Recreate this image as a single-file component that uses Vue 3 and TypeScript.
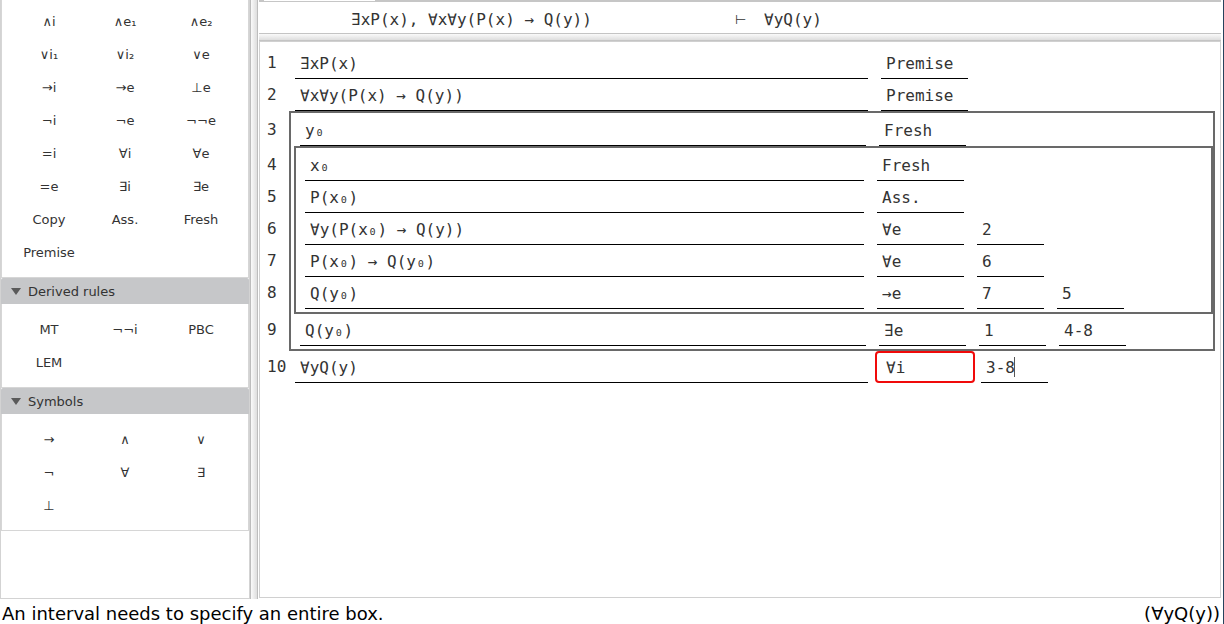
<script setup lang="ts">
import { computed, ref } from 'vue'

interface Line {
  formula: string
  rule: string
  refs: string[]
  depth: number
  invalid?: boolean
  active?: boolean
}

interface Palette {
  title: string
  headed: boolean
  open: boolean
  items: string[]
}

interface BoxNode {
  line?: number
  children?: BoxNode[]
}

const palettes = ref<Palette[]>([
  {
    title: 'Basic rules',
    headed: false,
    open: true,
    items: [
      '∧i', '∧e₁', '∧e₂', '∨i₁', '∨i₂', '∨e', '→i', '→e', '⊥e', '¬i', '¬e', '¬¬e',
      '=i', '∀i', '∀e', '=e', '∃i', '∃e', 'Copy', 'Ass.', 'Fresh', 'Premise',
    ],
  },
  { title: 'Derived rules', headed: true, open: true, items: ['MT', '¬¬i', 'PBC', 'LEM'] },
  { title: 'Symbols', headed: true, open: true, items: ['→', '∧', '∨', '¬', '∀', '∃', '⊥'] },
])

const premises = ref('∃xP(x), ∀x∀y(P(x) → Q(y))')
const conclusion = ref('∀yQ(y)')

const lines = ref<Line[]>([
  { formula: '∃xP(x)', rule: 'Premise', refs: [], depth: 0 },
  { formula: '∀x∀y(P(x) → Q(y))', rule: 'Premise', refs: [], depth: 0 },
  { formula: 'y₀', rule: 'Fresh', refs: [], depth: 1 },
  { formula: 'x₀', rule: 'Fresh', refs: [], depth: 2 },
  { formula: 'P(x₀)', rule: 'Ass.', refs: [], depth: 2 },
  { formula: '∀y(P(x₀) → Q(y))', rule: '∀e', refs: ['2'], depth: 2 },
  { formula: 'P(x₀) → Q(y₀)', rule: '∀e', refs: ['6'], depth: 2 },
  { formula: 'Q(y₀)', rule: '→e', refs: ['7', '5'], depth: 2 },
  { formula: 'Q(y₀)', rule: '∃e', refs: ['1', '4-8'], depth: 1 },
  { formula: '∀yQ(y)', rule: '∀i', refs: ['3-8'], depth: 0, invalid: true, active: true },
])

// Groups consecutive deeper lines into nested boxes.
function nest(from: number, to: number, depth: number): BoxNode[] {
  const out: BoxNode[] = []
  let i = from
  while (i < to) {
    if (lines.value[i].depth === depth) {
      out.push({ line: i })
      i++
    } else {
      let j = i
      while (j < to && lines.value[j].depth > depth) j++
      out.push({ children: nest(i, j, depth + 1) })
      i = j
    }
  }
  return out
}

const outer = computed(() => nest(0, lines.value.length, 0))

// Line numbers leave room where a box edge passes between two lines.
const gutter = computed(() =>
  lines.value.map((l, i) => ({
    number: i + 1,
    opens: i > 0 && l.depth > lines.value[i - 1].depth,
    closes: i < lines.value.length - 1 && lines.value[i + 1].depth < l.depth,
  })),
)

// Every block is a list of groups; a plain line is a group of one.
const blocks = computed(() =>
  outer.value.map((n) => ({
    boxed: !!n.children,
    groups: (n.children ?? [n]).map((c) => ({
      boxed: !!c.children,
      rows: (c.children ?? [c]).map((r) => r.line as number),
    })),
  })),
)
</script>

<template>
  <div class="app">
    <div class="workspace">
      <aside class="sidebar">
        <section v-for="p in palettes" :key="p.title" class="palette" :aria-label="p.title">
          <button v-if="p.headed" class="palette-title" :aria-expanded="p.open" @click="p.open = !p.open">
            <svg class="arrow" viewBox="0 0 10 7" width="10" height="7" aria-hidden="true">
              <path d="M0 0H10L5 7Z" fill="#5a5a5a" />
            </svg>
            {{ p.title }}
          </button>
          <div v-show="p.open" class="palette-body" :class="{ first: !p.headed }">
            <button v-for="item in p.items" :key="item" class="key">{{ item }}</button>
          </div>
        </section>
      </aside>
      <div class="divider vertical"></div>
      <main class="editor">
        <div class="tabs"><div class="tab"></div></div>
        <header class="sequent">
          <input v-model="premises" class="field" aria-label="Premises" spellcheck="false" />
          <span class="turnstile">⊢</span>
          <input v-model="conclusion" class="field" aria-label="Conclusion" spellcheck="false" />
        </header>
        <div class="divider horizontal"></div>
        <div class="proof">
          <div class="gutter">
            <div v-for="g in gutter" :key="g.number" class="number" :class="{ opens: g.opens, closes: g.closes }">
              {{ g.number }}
            </div>
          </div>
          <div class="lines">
            <div v-for="(b, bi) in blocks" :key="bi" :class="{ box: b.boxed }">
              <div v-for="(g, gi) in b.groups" :key="gi" :class="{ box: g.boxed }">
                <div v-for="i in g.rows" :key="i" class="row">
                  <input v-model="lines[i].formula" class="field cell formula" :aria-label="`Formula ${i + 1}`" spellcheck="false" />
                  <input v-model="lines[i].rule" class="field cell rule" :class="{ invalid: lines[i].invalid }" :aria-label="`Rule ${i + 1}`" spellcheck="false" />
                  <div v-for="k in 3" :key="k" class="ref">
                    <template v-if="k <= lines[i].refs.length">
                      <input v-model="lines[i].refs[k - 1]" class="field cell" :aria-label="`Reference ${k} of line ${i + 1}`" spellcheck="false" />
                      <span v-if="lines[i].active" class="caret"></span>
                    </template>
                  </div>
                </div>
              </div>
            </div>
          </div>
        </div>
      </main>
    </div>
    <footer class="status">
      <span>An interval needs to specify an entire box.</span>
      <span>(∀yQ(y))</span>
    </footer>
  </div>
</template>

<style>
body {
  background: #fff;
}
</style>

<style scoped>
.app {
  box-sizing: border-box;
  min-height: 100vh;
  display: flex;
  flex-direction: column;
  border-right: 1px solid #27425c;
  font-family: "DejaVu Sans", sans-serif;
  font-size: 13px;
  color: #333;
}
.app * {
  box-sizing: border-box;
}
.workspace {
  flex: 1;
  display: flex;
}
.sidebar {
  width: 250px;
  flex: none;
  border: 1px solid #d3d3d3;
  border-top: 0;
}
.palette-title {
  display: flex;
  align-items: center;
  gap: 7px;
  width: 100%;
  height: 26px;
  padding: 0 10px;
  border: 0;
  border-radius: 2px 2px 0 0;
  background: #c6c7c9;
  font: inherit;
  color: inherit;
}
.palette-body {
  display: grid;
  grid-template-columns: repeat(3, 76px);
  grid-auto-rows: 33px;
  padding: 9px 9px 8px;
  border: 1px solid #d6d6d6;
  border-top: 0;
}
.palette-body.first {
  padding-top: 5px;
}
.key {
  padding: 0;
  border: 0;
  background: none;
  font: inherit;
  color: inherit;
}
.divider.vertical {
  width: 8px;
  flex: none;
  border: 1px solid #bdbdbd;
  border-width: 0 1px;
  background: linear-gradient(to right, #fafafa, #dedede);
}
.divider.horizontal {
  height: 8px;
  border: 1px solid #c4c4c4;
  border-width: 1px 0;
  background: linear-gradient(#fafafa, #dedede);
}
.editor {
  flex: 1;
  min-width: 0;
  display: flex;
  flex-direction: column;
  padding: 0 2px 1px 1px;
}
.tabs {
  height: 2px;
  padding-left: 5px;
  background: #c6c6c6;
}
.tab {
  width: 111px;
  height: 1px;
  background: #fff;
}
.sequent {
  display: grid;
  grid-template-columns: 1fr 10px 1fr;
  gap: 14px;
  align-items: center;
  height: 31px;
  padding: 3px 87px 0;
}
.field {
  display: block;
  width: 100%;
  min-width: 0;
  height: 32px;
  margin: 0;
  padding: 0 5px;
  border: 0;
  border-radius: 0;
  outline: 0;
  background: none;
  font-family: "DejaVu Sans Mono", monospace;
  font-size: 16px;
  color: #333;
}
.sequent .field {
  height: 28px;
}
.turnstile {
  font-size: 13px;
}
.proof {
  flex: 1;
  display: flex;
  padding: 5px 5px 0 7px;
  border: 1px solid #d0d0d0;
}
.gutter {
  width: 22px;
  flex: none;
  font-family: "DejaVu Sans Mono", monospace;
  font-size: 16px;
  line-height: 32px;
}
.number {
  height: 32px;
}
.number.opens {
  margin-top: 3px;
}
.number.closes {
  margin-bottom: 5px;
}
.lines {
  flex: 1;
  min-width: 0;
}
.box {
  padding: 1px 0 3px 3px;
  border: 2px solid #696969;
}
.row {
  display: flex;
  gap: 13px;
  padding: 0 7px 0 6px;
}
.cell {
  padding-top: 1px;
  border-bottom: 1px solid #000;
}
.formula {
  flex: 1;
}
.rule {
  flex: none;
  width: 87px;
}
.rule.invalid {
  width: 100px;
  margin: 0 -7px 0 -6px;
  padding: 0 9px;
  border: 2px solid #f00a0a;
  border-radius: 4px;
}
.ref {
  position: relative;
  flex: none;
  width: 67px;
}
.caret {
  position: absolute;
  top: 6px;
  left: 33px;
  width: 1px;
  height: 20px;
  background: #555;
}
.status {
  display: flex;
  justify-content: space-between;
  height: 25px;
  padding: 0 3px 0 2px;
  font-size: 18px;
  line-height: 29px;
  color: #000;
}
</style>
